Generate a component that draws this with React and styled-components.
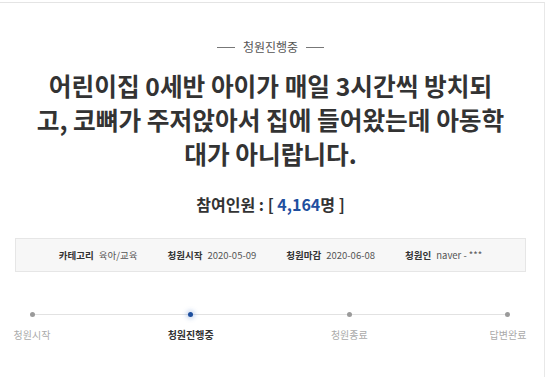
import React from "react";
import styled, { createGlobalStyle } from "styled-components";

const GlobalStyle = createGlobalStyle`
  html, body {
    margin: 0;
    padding: 0;
    background: #fff;
    font-family: "Noto Sans CJK KR", "Noto Sans", sans-serif;
  }
`;

const titleLines = [
  "어린이집 0세반 아이가 매일 3시간씩 방치되",
  "고, 코뼈가 주저앉아서 집에 들어왔는데 아동학",
  "대가 아니랍니다.",
];

const steps = [
  { label: "청원시작", state: "done" },
  { label: "청원진행중", state: "active" },
  { label: "청원종료", state: "todo" },
  { label: "답변완료", state: "todo" },
];

const info = [
  { key: "카테고리", value: "육아/교육" },
  { key: "청원시작", value: "2020-05-09" },
  { key: "청원마감", value: "2020-06-08" },
  { key: "청원인", value: "naver - ***" },
];

function App() {
  return (
    <Page>
      <GlobalStyle />
      <Panel>
        <Content>
          <Status>청원진행중</Status>
          <Title>
            {titleLines.map((l, i) => (
              <React.Fragment key={i}>
                {l}
                {i < titleLines.length - 1 && <br />}
              </React.Fragment>
            ))}
          </Title>
          <Count>
            참여인원 : [ <Num>4,164</Num>명 ]
          </Count>
          <InfoBox>
            {info.map((it) => (
              <InfoItem key={it.key}>
                <b>{it.key}</b>
                <span>{it.value}</span>
              </InfoItem>
            ))}
          </InfoBox>
        </Content>
        <Progress>
          <Track />
          {steps.map((s) => (
            <Step key={s.label}>
              <Dot $active={s.state === "active"} />
              <StepLabel $active={s.state === "active"}>{s.label}</StepLabel>
            </Step>
          ))}
        </Progress>
      </Panel>
    </Page>
  );
}

const Page = styled.div`
  padding-top: 2px;
  height: 375px;
`;

const Panel = styled.div`
  width: 545px;
  height: 100%;
  border-top: 1px solid #e4e4e4;
  border-right: 1px solid #e8e8e8;
  box-sizing: border-box;
`;

const Content = styled.div`
  width: 511px;
  margin-left: 15px;
  display: flex;
  flex-direction: column;
  align-items: center;
`;

const Status = styled.div`
  margin-top: 36px;
  display: flex;
  align-items: center;
  gap: 8px;
  font-size: 12px;
  line-height: 16px;
  color: #555;

  &::before,
  &::after {
    content: "";
    width: 18px;
    height: 1px;
    background: #777;
  }
`;

const Title = styled.h1`
  margin: 13px 0 0;
  font-size: 24.7px;
  line-height: 34px;
  font-weight: 700;
  color: #333;
  text-align: center;
  white-space: nowrap;
`;

const Count = styled.div`
  margin-top: 24px;
  font-size: 16px;
  line-height: 20px;
  font-weight: 700;
  color: #333;
`;

const Num = styled.span`
  color: #1f4f9f;
`;

const InfoBox = styled.div`
  margin-top: 24px;
  width: 100%;
  height: 34px;
  box-sizing: border-box;
  background: #f7f7f7;
  border: 1px solid #e6e6e6;
  display: flex;
  justify-content: center;
  align-items: center;
  gap: 30px;
`;

const InfoItem = styled.div`
  display: flex;
  align-items: center;
  gap: 5px;
  font-size: 9.5px;
  color: #555;

  b {
    color: #333;
    font-weight: 700;
  }
`;

const Progress = styled.div`
  position: relative;
  margin: 37px 0 0 7px;
  width: 526px;
  display: flex;
  justify-content: space-between;
`;

const Track = styled.div`
  position: absolute;
  left: 25px;
  right: 25px;
  top: 5px;
  height: 1px;
  background: #e2e2e2;
`;

const Step = styled.div`
  position: relative;
  width: 50px;
  display: flex;
  flex-direction: column;
  align-items: center;
`;

const Dot = styled.span`
  width: 5px;
  height: 5px;
  margin-top: 3px;
  border-radius: 50%;
  background: ${(p) => (p.$active ? "#1d4f9e" : "#9a9a9a")};
  box-shadow: ${(p) => (p.$active ? "0 0 4px 2px rgba(60,110,200,0.25)" : "none")};
`;

const StepLabel = styled.span`
  margin-top: 10px;
  font-size: 10px;
  white-space: nowrap;
  color: ${(p) => (p.$active ? "#333" : "#aaa")};
  font-weight: ${(p) => (p.$active ? 700 : 400)};
`;

export default App;
